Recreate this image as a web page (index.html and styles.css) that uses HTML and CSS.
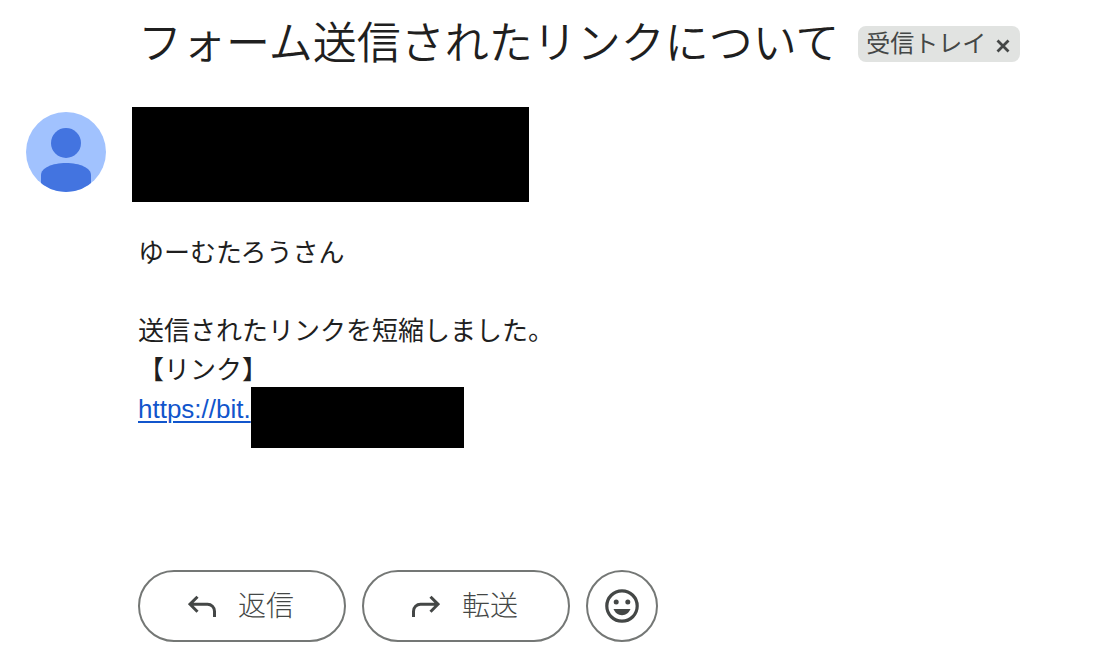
FILE: index.html
```html
<!DOCTYPE html>
<html lang="ja">
<head>
<meta charset="utf-8">
<meta name="viewport" content="width=device-width, initial-scale=1">
<title>フォーム送信されたリンクについて</title>
<link rel="stylesheet" href="styles.css">
</head>
<body>
<main class="mail">
  <header class="subject">
    <h1 class="subject-text">フォーム送信されたリンクについて</h1>
    <span class="label">受信トレイ
      <button class="label-remove" type="button" aria-label="ラベルを削除">
        <svg width="14" height="14" viewBox="0 0 14 14" aria-hidden="true"><path d="M1.500 1.500l11 11M12.500 1.500l-11 11" fill="none" stroke="currentColor" stroke-width="2.800"/></svg>
      </button>
    </span>
  </header>
  <article class="message">
    <svg class="avatar" viewBox="0 0 80 80" role="img" aria-label="送信者">
      <defs><clipPath id="disc"><circle cx="40" cy="40" r="40"/></clipPath></defs>
      <g clip-path="url(#disc)">
        <path fill="#a1c2fe" d="M0 0h80v80H0z"/>
        <circle cx="40" cy="31" r="15" fill="#4374e0"/>
        <path fill="#4374e0" d="M15 80V63C15 56 26 51 40 51s25 5 25 12v17z"/>
      </g>
    </svg>
    <div class="content">
      <div class="sender-mask"></div>
      <div class="body">
        <p>ゆーむたろうさん</p>
        <p class="gap">送信されたリンクを短縮しました。</p>
        <p>【リンク】</p>
        <div class="link-row"><a class="link" href="#">https://bit.</a><span class="link-mask"></span></div>
      </div>
      <div class="actions">
        <button class="action" type="button">
          <svg width="28" height="22" viewBox="0 0 28 22" aria-hidden="true"><path d="M9.500 1.700L2 9.200l7.500 7.500M2 9.200h17.500a7 7 0 0 1 7 7V22" fill="none" stroke="currentColor" stroke-width="3"/></svg>
          <span class="action-text">返信</span>
        </button>
        <button class="action" type="button">
          <svg width="28" height="22" viewBox="0 0 28 22" aria-hidden="true"><path d="M18.500 1.700L26 9.200l-7.500 7.500M26 9.200H8.500a7 7 0 0 0-7 7V22" fill="none" stroke="currentColor" stroke-width="3"/></svg>
          <span class="action-text">転送</span>
        </button>
        <button class="action action-round" type="button" aria-label="リアクションを追加">
          <svg width="34" height="34" viewBox="0 0 34 34" aria-hidden="true"><circle cx="17" cy="17" r="15.200" fill="none" stroke="currentColor" stroke-width="3.200"/><circle cx="11.200" cy="13" r="2.500" fill="currentColor"/><circle cx="22.800" cy="13" r="2.500" fill="currentColor"/><path d="M8.500 20h17c-1.500 3.800-4.700 6.200-8.500 6.200S10 23.800 8.500 20z" fill="currentColor"/></svg>
        </button>
      </div>
    </div>
  </article>
</main>
</body>
</html>
```
FILE: styles.css
```css
* {
  box-sizing: border-box;
}

body {
  margin: 0;
  background: #fff;
  color: #1f1f1f;
  font-family: "Liberation Sans", "Noto Sans CJK JP", sans-serif;
}

h1,
p {
  margin: 0;
}

.mail {
  padding: 10px 26px 30px;
}

.subject {
  display: flex;
  align-items: center;
  gap: 19px;
  padding-left: 112px;
}

.subject-text {
  font-size: 44px;
  font-weight: 350;
  line-height: 68px;
}

.label {
  display: flex;
  align-items: center;
  gap: 10px;
  height: 36px;
  padding: 0 10px 0 8px;
  border-radius: 8px;
  background: #e1e3e1;
  color: #444746;
  font-size: 24px;
  line-height: 36px;
  white-space: nowrap;
}

.label-remove {
  display: flex;
  padding: 4px 0 0;
  border: 0;
  background: none;
  color: inherit;
}

.message {
  display: flex;
  align-items: flex-start;
  gap: 26px;
  padding-top: 29px;
}

.avatar {
  flex: none;
  width: 80px;
  margin-top: 5px;
}

.content {
  flex: 1;
}

.sender-mask {
  max-width: 397px;
  height: 95px;
  background: #000;
}

.body {
  padding: 32px 6px 0;
  font-size: 26px;
  line-height: 39px;
}

.gap {
  padding-top: 39px;
}

.link-row {
  display: flex;
  margin-top: -3px;
}

.link {
  padding-top: 3px;
  color: #1155cc;
  text-decoration-thickness: 2px;
  text-underline-offset: 3px;
}

.link-mask {
  width: 213px;
  height: 61px;
  background: #000;
}

.actions {
  display: flex;
  gap: 16px;
  padding: 122px 6px 0;
}

.action {
  display: flex;
  align-items: center;
  justify-content: center;
  gap: 22px;
  width: 208px;
  height: 72px;
  padding: 0 2px 0 0;
  border: 2px solid #747775;
  border-radius: 36px;
  background: #fff;
  color: #444746;
  font-family: inherit;
  font-size: 28px;
  font-weight: 300;
}

.action-text {
  padding-bottom: 4px;
}

.action-round {
  width: 72px;
  padding: 0;
}
```
